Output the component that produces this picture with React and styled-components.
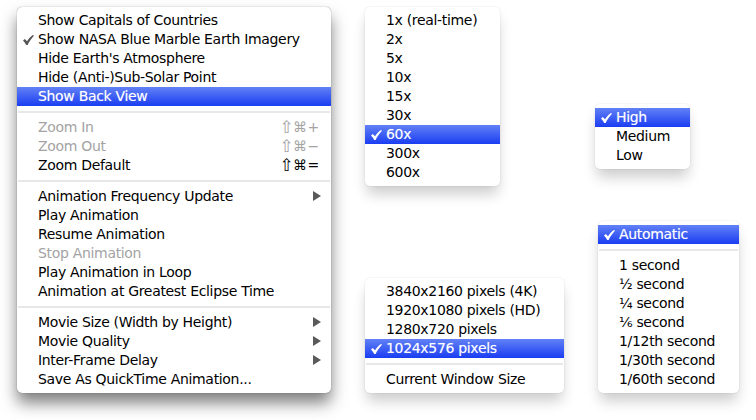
import React from 'react'
import styled, { createGlobalStyle, css } from 'styled-components'

const GlobalStyle = createGlobalStyle`
  html, body {
    margin: 0;
    background: #fff;
  }
`

const Page = styled.div`
  display: flex;
  width: 756px;
  height: 420px;
  box-sizing: border-box;
  padding: 7px 0 27px 17px;
  overflow: hidden;
  font-family: 'DejaVu Sans', 'Liberation Sans', sans-serif;
  font-size: 14px;
  color: #000;
`

const Column = styled.div`
  display: flex;
  flex-direction: column;
  align-items: flex-start;
  justify-content: space-between;
  width: ${(p) => p.$width}px;
  margin-right: ${(p) => p.$gap || 0}px;
`

const Menu = styled.div`
  box-sizing: border-box;
  width: ${(p) => p.$width}px;
  padding: 4px 0;
  margin-top: ${(p) => p.$top || 0}px;
  margin-left: ${(p) => p.$left || 0}px;
  ${(p) => p.$pushDown && 'margin-top: auto;'}
  background: #fff;
  border-radius: 5px;
  ${(p) =>
    p.$active
      ? css`
          box-shadow: 0 0 1px rgba(0, 0, 0, 0.55), 0 10px 16px rgba(0, 0, 0, 0.5);
        `
      : css`
          box-shadow: 0 0 2px rgba(0, 0, 0, 0.12), 0 10px 14px -2px rgba(0, 0, 0, 0.2);
        `}
`

const Row = styled.div`
  position: relative;
  display: flex;
  align-items: center;
  box-sizing: border-box;
  height: 19px;
  padding: 0 5px 1px 21px;
  white-space: nowrap;
  letter-spacing: -0.32px;
  line-height: 18px;
  color: ${(p) => (p.$disabled ? '#a3a3a3' : p.$selected ? '#fff' : '#000')};
  ${(p) =>
    p.$selected &&
    css`
      background: linear-gradient(#6281f6, #1a3df2);
      text-shadow: 0 0 1px rgba(255, 255, 255, 0.4);
    `}
`

const Check = styled.svg`
  position: absolute;
  left: 6px;
  top: 5px;
  width: 11px;
  height: 10px;
  fill: ${(p) => (p.$selected ? '#fff' : '#555')};
`

const Shortcut = styled.span`
  display: flex;
  align-items: center;
  margin-left: auto;
  margin-right: 6px;
  letter-spacing: 0;
`

const KeyGlyph = styled.span`
  width: 13.5px;
  text-align: center;
  font-size: ${(p) => p.$size || 14}px;
`

const Arrow = styled.span`
  margin-left: auto;
  margin-right: 5px;
  width: 0;
  height: 0;
  border-style: solid;
  border-width: 5px 0 5px 8px;
  border-color: transparent transparent transparent #5a5a5a;
`

const Separator = styled.div`
  height: 2px;
  margin: 5px 1px 5px;
  background: #e8e8e8;
`

const Items = ({ items }) =>
  items.map((item, i) =>
    item === '-' ? (
      <Separator key={i} />
    ) : (
      <Row key={i} $selected={item.selected} $disabled={item.disabled}>
        {item.checked && (
          <Check viewBox="0 0 11 10" $selected={item.selected}>
            <path d="M0 5.6 L1.8 4 L4 6.2 C5.6 3.8 7.6 1.6 10 0 L11 0.8 C8.6 3.2 6.4 6.4 4.6 10 L3.2 10 C2.3 8.2 1.2 6.8 0 5.6 Z" />
          </Check>
        )}
        {item.label}
        {item.keys && (
          <Shortcut>
            <KeyGlyph $size={17}>⇧</KeyGlyph>
            <KeyGlyph>⌘</KeyGlyph>
            <KeyGlyph>{item.keys}</KeyGlyph>
          </Shortcut>
        )}
        {item.sub && <Arrow />}
      </Row>
    )
  )

const viewItems = [
  { label: 'Show Capitals of Countries' },
  { label: 'Show NASA Blue Marble Earth Imagery', checked: true },
  { label: "Hide Earth's Atmosphere" },
  { label: 'Hide (Anti-)Sub-Solar Point' },
  { label: 'Show Back View', selected: true },
  '-',
  { label: 'Zoom In', disabled: true, keys: '+' },
  { label: 'Zoom Out', disabled: true, keys: '−' },
  { label: 'Zoom Default', keys: '=' },
  '-',
  { label: 'Animation Frequency Update', sub: true },
  { label: 'Play Animation' },
  { label: 'Resume Animation' },
  { label: 'Stop Animation', disabled: true },
  { label: 'Play Animation in Loop' },
  { label: 'Animation at Greatest Eclipse Time' },
  '-',
  { label: 'Movie Size (Width by Height)', sub: true },
  { label: 'Movie Quality', sub: true },
  { label: 'Inter-Frame Delay', sub: true },
  { label: 'Save As QuickTime Animation...' },
]

const speedItems = [
  { label: '1x (real-time)' },
  { label: '2x' },
  { label: '5x' },
  { label: '10x' },
  { label: '15x' },
  { label: '30x' },
  { label: '60x', selected: true, checked: true },
  { label: '300x' },
  { label: '600x' },
]

const sizeItems = [
  { label: '3840x2160 pixels (4K)' },
  { label: '1920x1080 pixels (HD)' },
  { label: '1280x720 pixels' },
  { label: '1024x576 pixels', selected: true, checked: true },
  '-',
  { label: 'Current Window Size' },
]

const qualityItems = [
  { label: 'High', selected: true, checked: true },
  { label: 'Medium' },
  { label: 'Low' },
]

const delayItems = [
  { label: 'Automatic', selected: true, checked: true },
  '-',
  { label: '1 second' },
  { label: '½ second' },
  { label: '¼ second' },
  { label: '⅙ second' },
  { label: '1/12th second' },
  { label: '1/30th second' },
  { label: '1/60th second' },
]

const App = () => {
  return (
    <Page>
      <GlobalStyle />
      <Column $width={314} $gap={34}>
        <Menu $width={314} $active>
          <Items items={viewItems} />
        </Menu>
      </Column>
      <Column $width={199} $gap={31}>
        <Menu $width={135}>
          <Items items={speedItems} />
        </Menu>
        <Menu $width={199}>
          <Items items={sizeItems} />
        </Menu>
      </Column>
      <Column $width={144}>
        <Menu $width={95} $top={97}>
          <Items items={qualityItems} />
        </Menu>
        <Menu $width={141} $left={3} $pushDown>
          <Items items={delayItems} />
        </Menu>
      </Column>
    </Page>
  )
}

export default App
